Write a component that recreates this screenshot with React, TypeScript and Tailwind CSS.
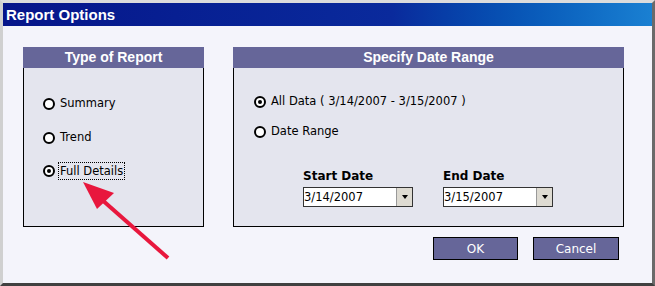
import React from "react";

const body = { fontFamily: '"DejaVu Sans", Verdana, sans-serif' };
const head = { fontFamily: '"Liberation Sans", Arial, sans-serif' };

const Radio = ({ checked }: { checked?: boolean }) => (
  <span className="w-[12px] h-[12px] rounded-full border-[2.5px] border-black bg-white flex items-center justify-center shrink-0">
    {checked && <span className="w-[4px] h-[4px] rounded-full bg-black" />}
  </span>
);

const Option = ({ label, checked, focus }: { label: string; checked?: boolean; focus?: boolean }) => (
  <div className="flex items-center h-[20px]">
    <Radio checked={checked} />
    {focus ? (
      <span className="ml-[3px] px-[1px] h-[18px] leading-[16px] border border-dotted border-black">{label}</span>
    ) : (
      <span className="ml-[5px]">{label}</span>
    )}
  </div>
);

const DateBox = ({ value }: { value: string }) => (
  <div className="flex w-[110px] h-[20px] border border-[#333] bg-white">
    <span className="flex-1 leading-[18px]">{value}</span>
    <span className="w-[16px] h-full bg-[#dedbd2] border-l border-[#999] flex items-center justify-center">
      <span className="w-0 h-0 border-l-[3.5px] border-r-[3.5px] border-t-[4px] border-l-transparent border-r-transparent border-t-black" />
    </span>
  </div>
);

const PanelHead = ({ title }: { title: string }) => (
  <div className="h-[21px] bg-[#666699] text-white font-bold text-[14px] leading-[21px] text-center" style={head}>
    {title}
  </div>
);

export default function App() {
  return (
    <div
      className="relative w-[655px] h-[286px] flex flex-col border-[3px] border-t-[#dcdcdc] border-l-[#d0d0d0] border-r-[#6a6a6a] border-b-[#404040] text-black text-[11.5px]"
      style={body}
    >
      <div className="h-[23px] shrink-0 bg-gradient-to-r from-[#06158a] via-[#0a2a9c] via-60% to-[#1a80d2] text-white font-bold text-[15px] leading-[23px] pl-[3px]" style={head}>
        Report Options
      </div>
      <div className="flex-1 bg-[#f4f4fb] pt-[21px] pl-[20px]">
        <div className="flex gap-[29px]">
          <div className="w-[181px] h-[180px] flex flex-col">
            <PanelHead title="Type of Report" />
            <div className="flex-1 bg-[#e4e5ee] border border-t-0 border-black pl-[19px] pt-[26px] flex flex-col">
              <Option label="Summary" />
              <div className="mt-[14px]">
                <Option label="Trend" />
              </div>
              <div className="mt-[13px]">
                <Option label="Full Details" checked focus />
              </div>
            </div>
          </div>
          <div className="w-[391px] h-[180px] flex flex-col">
            <PanelHead title="Specify Date Range" />
            <div className="flex-1 bg-[#e4e5ee] border border-t-0 border-black pl-[20px] pt-[24px] flex flex-col">
              <Option label="All Data ( 3/14/2007 - 3/15/2007 )" checked />
              <div className="mt-[10px]">
                <Option label="Date Range" />
              </div>
              <div className="flex gap-[30px] pl-[49px] mt-[26px]">
                <div className="flex flex-col">
                  <span className="font-bold text-[12px] leading-[16px] mb-[3px]">Start Date</span>
                  <DateBox value="3/14/2007" />
                </div>
                <div className="flex flex-col">
                  <span className="font-bold text-[12px] leading-[16px] mb-[3px]">End Date</span>
                  <DateBox value="3/15/2007" />
                </div>
              </div>
            </div>
          </div>
        </div>
        <div className="flex justify-end gap-[15px] pr-[33px] mt-[10px]">
          <button className="w-[85px] h-[23px] bg-[#666699] border border-black text-white text-[12px]">OK</button>
          <button className="w-[86px] h-[23px] bg-[#666699] border border-black text-white text-[12px]">Cancel</button>
        </div>
      </div>
      <svg className="absolute left-[-3px] top-[-3px] pointer-events-none" width="655" height="286">
        <line x1="168" y1="258" x2="92" y2="191" stroke="#e8173d" strokeWidth="4" />
        <polygon points="83,182 97,209 114,193" fill="#e8173d" />
      </svg>
    </div>
  );
}
